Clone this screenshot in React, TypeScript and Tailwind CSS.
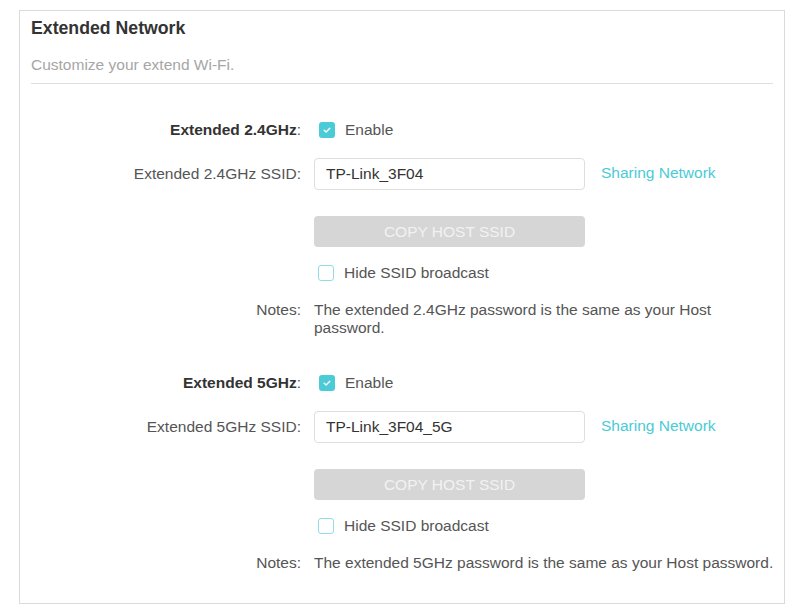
import { useState } from 'react';

const teal = 'text-[#4acbd6]';

const Check = ({ checked, onChange }: { checked: boolean; onChange: () => void }) => (
  <button
    type="button"
    onClick={onChange}
    className={`w-4 h-4 rounded-[3px] flex items-center justify-center shrink-0 ${
      checked ? 'bg-[#4acbd6]' : 'border border-[#90dde4] bg-white'
    }`}
  >
    {checked && (
      <svg viewBox="0 0 16 16" className="w-[10px] h-[10px]" fill="none" stroke="white" strokeWidth={2.2} strokeLinecap="round" strokeLinejoin="round">
        <path d="M3.5 8.3l3 2.8 6-6" />
      </svg>
    )}
  </button>
);

const Row = ({ label, bold, className, children }: { label?: string; bold?: boolean; className?: string; children: React.ReactNode }) => (
  <div className={`flex items-center ${className ?? ''}`}>
    <div className="w-[270px] shrink-0 text-right text-[#555]">
      {label && (bold ? (
        <>
          <span className="font-bold text-[#333]">{label}</span>:
        </>
      ) : (
        <span>{label}:</span>
      ))}
    </div>
    <div className="ml-[13px] flex items-center">{children}</div>
  </div>
);

const BandSection = ({ band, ssid, notes }: { band: string; ssid: string; notes: React.ReactNode }) => {
  const [enabled, setEnabled] = useState(true);
  const [hidden, setHidden] = useState(false);
  const [value, setValue] = useState(ssid);

  return (
    <div className="mt-[30px]">
      <Row label={`Extended ${band}`} bold className="h-8">
        <div className="pl-[5px] flex items-center gap-[10px]">
          <Check checked={enabled} onChange={() => setEnabled(!enabled)} />
          <span className="text-[#555]">Enable</span>
        </div>
      </Row>

      <Row label={`Extended ${band} SSID`} className="mt-[12px]">
        <input
          value={value}
          onChange={(e) => setValue(e.target.value)}
          className="w-[271px] h-8 px-[11px] border border-[#dedede] rounded-[4px] text-[#333] outline-none"
        />
        <span className={`ml-[16px] ${teal} -mt-[3px]`}>Sharing Network</span>
      </Row>

      <Row className="mt-[26px]">
        <button type="button" className="w-[271px] h-[31px] rounded-[4px] bg-[#d6d6d6] text-[#f2f2f2]">
          COPY HOST SSID
        </button>
      </Row>

      <Row className="mt-[14px] h-6">
        <div className="pl-[4px] flex items-center gap-[10px]">
          <Check checked={hidden} onChange={() => setHidden(!hidden)} />
          <span className="text-[#555]">Hide SSID broadcast</span>
        </div>
      </Row>

      {/* notes */}
      <div className="flex items-start mt-[16px] leading-[18px]">
        <div className="w-[270px] shrink-0 text-right text-[#555]">Notes:</div>
        <div className="ml-[13px] whitespace-nowrap text-[#555]">{notes}</div>
      </div>
    </div>
  );
};

export default function App() {
  return (
    <div className="bg-white w-[799px] h-[613px] pt-[10px] pl-[19px] text-[15.5px] font-['Liberation_Sans',Arial,sans-serif]">
      <div className="w-[766px] h-[594px] border border-[#dadada] bg-white px-[11px] pt-[7px]">
        <h1 className="text-[17.7px] leading-[20px] font-bold text-[#333]">Extended Network</h1>
        <p className="mt-[17px] leading-[20px] text-[#a6a6a6]">Customize your extend Wi-Fi.</p>
        <div className="mt-[8px] h-px bg-[#dedede]" />

        <BandSection
          band="2.4GHz"
          ssid="TP-Link_3F04"
          notes={
            <>
              The extended 2.4GHz password is the same as your Host
              <br />
              password.
            </>
          }
        />
        <BandSection
          band="5GHz"
          ssid="TP-Link_3F04_5G"
          notes="The extended 5GHz password is the same as your Host password."
        />
      </div>
    </div>
  );
}
